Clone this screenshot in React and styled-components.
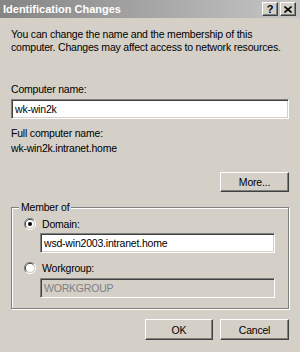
import React from 'react';
import styled, { createGlobalStyle } from 'styled-components';

const GlobalStyle = createGlobalStyle`
  html, body {
    margin: 0;
    padding: 0;
    background: #d4d0c8;
  }
  body {
    font-family: "Liberation Sans", Arial, sans-serif;
    font-size: 10.5px;
    letter-spacing: -0.2px;
    color: #000;
  }
`;

const Window = styled.div`
  width: 300px;
  height: 352px;
  background: #d4d0c8;
  box-sizing: border-box;
  overflow: hidden;
`;

const TitleBar = styled.div`
  height: 18px;
  display: flex;
  align-items: center;
  justify-content: space-between;
  padding: 0 4px 0 3px;
  background: linear-gradient(to right, #858585, #c6c6c6);
`;

const TitleText = styled.span`
  color: #fff;
  font-weight: bold;
  font-size: 11px;
  letter-spacing: 0;
`;

const TitleButtons = styled.div`
  display: flex;
  gap: 2px;
`;

const TitleButton = styled.div`
  width: 16px;
  height: 14px;
  box-sizing: border-box;
  background: #d4d0c8;
  border-top: 1px solid #fff;
  border-left: 1px solid #fff;
  border-right: 1px solid #404040;
  border-bottom: 1px solid #404040;
  box-shadow: inset -1px -1px 0 #808080;
  display: flex;
  align-items: center;
  justify-content: center;
  font-weight: bold;
  font-size: 11px;
  line-height: 1;
`;

const Content = styled.div`
  padding: 10px 11px 0 11px;
`;

const Text = styled.div`
  line-height: 13px;
  white-space: nowrap;
  margin-top: ${p => p.mt || 0}px;
`;

const TextInput = styled.div`
  height: 20px;
  box-sizing: border-box;
  margin-top: ${p => p.mt || 0}px;
  margin-left: ${p => p.ml || 0}px;
  border-top: 1px solid #808080;
  border-left: 1px solid #808080;
  border-right: 1px solid #fff;
  border-bottom: 1px solid #fff;
  box-shadow: inset 1px 1px 0 #404040, inset -1px -1px 0 #d4d0c8;
  background: ${p => (p.disabled ? '#d4d0c8' : '#fff')};
  color: ${p => (p.disabled ? '#808080' : '#000')};
  padding: 0 3px;
  display: flex;
  align-items: center;
`;

const ButtonRow = styled.div`
  display: flex;
  justify-content: flex-end;
  gap: 7px;
  margin-top: ${p => p.mt || 0}px;
`;

const Button = styled.div`
  width: ${p => p.w || 69}px;
  height: ${p => p.h || 20}px;
  box-sizing: border-box;
  border-top: 1px solid #fff;
  border-left: 1px solid #fff;
  border-right: 1px solid #404040;
  border-bottom: 1px solid #404040;
  box-shadow: inset -1px -1px 0 #808080;
  display: flex;
  align-items: center;
  justify-content: center;
`;

const Group = styled.div`
  position: relative;
  margin-top: 15px;
  height: 102px;
  box-sizing: border-box;
  border: 1px solid #808080;
  box-shadow: inset 1px 1px 0 #fff, 1px 1px 0 #fff;
  padding: 9px 13px 0 12px;
`;

const Legend = styled.span`
  position: absolute;
  top: -7px;
  left: 7px;
  padding: 0 2px;
  background: #d4d0c8;
  line-height: 13px;
`;

const RadioRow = styled.div`
  display: flex;
  align-items: center;
  gap: 6px;
  height: 14px;
  margin-top: ${p => p.mt || 0}px;
`;

const Radio = ({ checked }) => (
  <svg width="12" height="12" viewBox="0 0 12 12">
    <path d="M10 2 A5.5 5.5 0 0 0 2 10" stroke="#808080" strokeWidth="1" fill="none" />
    <path d="M9.2 2.8 A4.5 4.5 0 0 0 2.8 9.2" stroke="#404040" strokeWidth="1" fill="none" />
    <circle cx="6" cy="6" r="4" fill="#fff" />
    <path d="M2 10 A5.5 5.5 0 0 0 10 2" stroke="#fff" strokeWidth="1" fill="none" />
    <path d="M2.8 9.2 A4.5 4.5 0 0 0 9.2 2.8" stroke="#d4d0c8" strokeWidth="1" fill="none" />
    {checked && <circle cx="6" cy="6" r="2" fill="#000" />}
  </svg>
);

const CloseIcon = () => (
  <svg width="8" height="7" viewBox="0 0 8 7">
    <path d="M0.5 0.5 L7.5 6.5 M7.5 0.5 L0.5 6.5" stroke="#000" strokeWidth="1.6" />
  </svg>
);

export default function App() {
  return (
    <Window>
      <GlobalStyle />
      <TitleBar>
        <TitleText>Identification Changes</TitleText>
        <TitleButtons>
          <TitleButton>?</TitleButton>
          <TitleButton><CloseIcon /></TitleButton>
        </TitleButtons>
      </TitleBar>
      <Content>
        <Text>
          You can change the name and the membership of this<br />
          computer. Changes may affect access to network resources.
        </Text>
        <Text mt={29}>Computer name:</Text>
        <TextInput mt={3}>wk-win2k</TextInput>
        <Text mt={8}>Full computer name:</Text>
        <Text mt={2}>wk-win2k.intranet.home</Text>
        <ButtonRow mt={17}>
          <Button>More...</Button>
        </ButtonRow>
        <Group>
          <Legend>Member of</Legend>
          <RadioRow>
            <Radio checked />
            <span>Domain:</span>
          </RadioRow>
          <TextInput mt={2} ml={16}>wsd-win2003.intranet.home</TextInput>
          <RadioRow mt={8}>
            <Radio />
            <span>Workgroup:</span>
          </RadioRow>
          <TextInput mt={3} ml={16} disabled>WORKGROUP</TextInput>
        </Group>
        <ButtonRow mt={10}>
          <Button w={68} h={21}>OK</Button>
          <Button h={21}>Cancel</Button>
        </ButtonRow>
      </Content>
    </Window>
  );
}
